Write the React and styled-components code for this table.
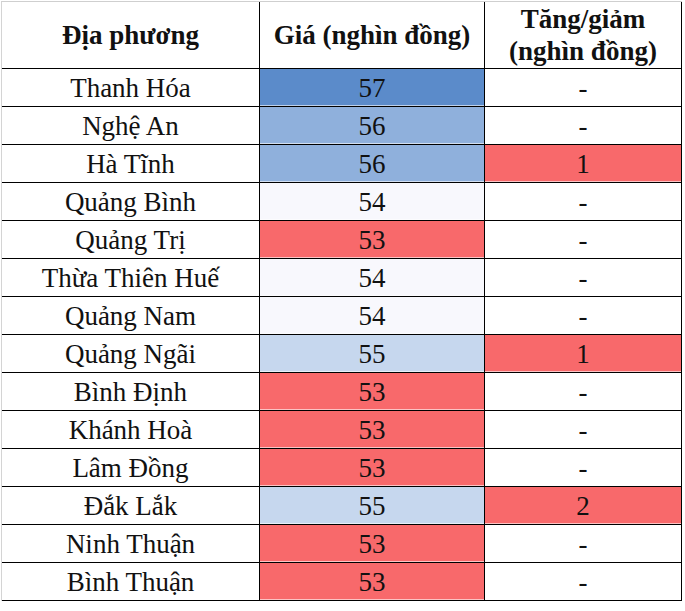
import React from 'react';
import styled, {createGlobalStyle} from 'styled-components';

const GlobalStyle = createGlobalStyle`
body{
  margin:0;
  background:#fff;
  color:#111;
}
`

const fills = {
  57:'#5b8bca',
  56:'#8fb0dc',
  55:'#c6d7ee',
  54:'#f8f8fd',
  53:'#f8696b',
}

const rows = [
  {name:'Thanh Hóa',price:57,change:'-'},
  {name:'Nghệ An',price:56,change:'-'},
  {name:'Hà Tĩnh',price:56,change:'1'},
  {name:'Quảng Bình',price:54,change:'-'},
  {name:'Quảng Trị',price:53,change:'-'},
  {name:'Thừa Thiên Huế',price:54,change:'-'},
  {name:'Quảng Nam',price:54,change:'-'},
  {name:'Quảng Ngãi',price:55,change:'1'},
  {name:'Bình Định',price:53,change:'-'},
  {name:'Khánh Hoà',price:53,change:'-'},
  {name:'Lâm Đồng',price:53,change:'-'},
  {name:'Đắk Lắk',price:55,change:'2'},
  {name:'Ninh Thuận',price:53,change:'-'},
  {name:'Bình Thuận',price:53,change:'-'},
]

const Table = styled.div`
display:grid;
grid-template-columns:258px 225px 197px;
grid-template-rows:67px;
grid-auto-rows:38px;
width:680px;
margin:1px 0 0 1px;
border-top:1px solid #cfcfcf;
border-left:1px solid #d4d4d4;
font-family:'Liberation Serif','Times New Roman',serif;
`

const Cell = styled.div`
box-sizing:border-box;
display:flex;
align-items:center;
justify-content:center;
text-align:center;
border-right:1px solid #000;
border-bottom:1px solid #000;
background:${p=>p.$fill || '#fff'};
box-shadow:${p=>p.$fill ? 'inset 0 -1px 0 rgba(255,255,255,0.6)' : 'none'};
font-size:27px;
padding-top:2px;
`

const HeadCell = styled(Cell)`
font-weight:bold;
font-size:27px;
line-height:32px;
padding-top:0;
`

const App = ()=>{
  return(
    <>
      <GlobalStyle/>
      <Table>
        <HeadCell>Địa phương</HeadCell>
        <HeadCell>Giá (nghìn đồng)</HeadCell>
        <HeadCell>Tăng/giảm<br/>(nghìn đồng)</HeadCell>
        {rows.map(r=>(
          <React.Fragment key={r.name}>
            <Cell>{r.name}</Cell>
            <Cell $fill={fills[r.price]}>{r.price}</Cell>
            <Cell $fill={r.change==='-'?null:'#f8696b'}>{r.change}</Cell>
          </React.Fragment>
        ))}
      </Table>
    </>
  )
}

export default App
